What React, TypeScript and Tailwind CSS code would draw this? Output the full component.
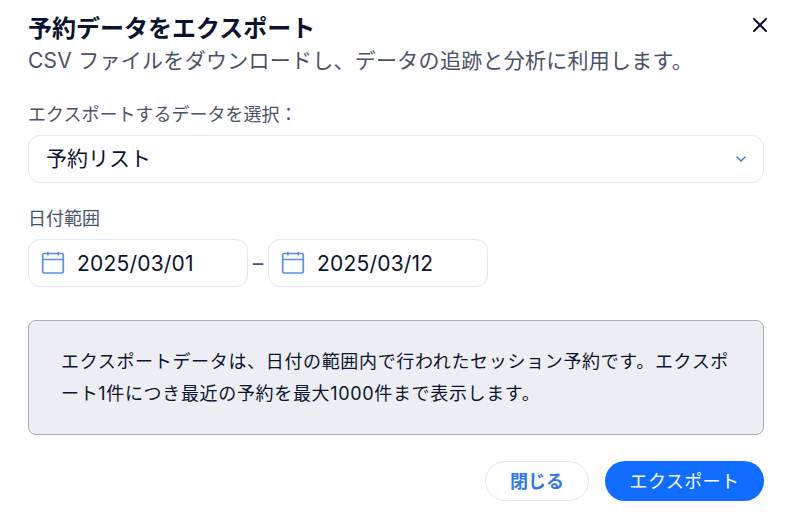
import { ChevronDown, X } from 'lucide-react'

const font = 'font-["Inter","Noto_Sans_CJK_JP",sans-serif]'

function CalendarIcon() {
  return (
    <svg width="24" height="24" viewBox="0 0 24 24" fill="none" stroke="#5a8fea" strokeWidth="1.7">
      <rect x="1.7" y="2.5" width="20.6" height="19.5" rx="1.5" />
      <path d="M1.7 8.5h20.6M7 1v3.5M17.2 1v3.5" />
    </svg>
  )
}

function DateField({ value }: { value: string }) {
  return (
    <div className="flex items-center w-[220px] h-12 rounded-xl border border-[#dfe9f6] bg-white pl-3">
      <CalendarIcon />
      <span className="ml-3 mt-px text-[21px] tracking-[0.2px] text-[#0c1330]">{value}</span>
    </div>
  )
}

export default function App() {
  return (
    <div className={`${font} relative w-[794px] h-[522px] bg-white px-7 pt-[14px] overflow-hidden`}>
      <button className="absolute right-[22px] top-[13px] text-[#0c1330]">
        <X size={24} strokeWidth={2} />
      </button>
      <h1 className="text-[24px] leading-[30px] font-bold text-[#0c1330]">予約データをエクスポート</h1>
      <p className="mt-px text-[21px] tracking-[0.27px] leading-[32px] text-[#4b5268]">CSV ファイルをダウンロードし、データの追跡と分析に利用します。</p>

      <div className="mt-[26px] text-[18px] leading-[24px] text-[#4b5268]">エクスポートするデータを選択：</div>
      <div className="mt-[8px] flex items-center justify-between w-[736px] h-12 rounded-xl border border-[#dfe9f6] bg-white pl-[17px] pr-[14px]">
        <span className="text-[21px] text-[#0c1330]">予約リスト</span>
        <ChevronDown size={16} strokeWidth={1.8} className="text-[#2f6fdc]" />
      </div>

      <div className="mt-[24px] text-[18px] leading-[24px] text-[#4b5268]">日付範囲</div>
      <div className="mt-[8px] flex items-center">
        <DateField value="2025/03/01" />
        <span className="w-5 mt-px text-center text-[21px] text-[#4b5268]">–</span>
        <DateField value="2025/03/12" />
      </div>

      <div className="mt-[33px] w-[736px] h-[115px] rounded-lg border border-[#a8abbd] bg-[#eceef3] pl-8 pr-7 py-[25px] text-[18px] tracking-[0.66px] leading-[32px] text-[#0c1330]">
        エクスポートデータは、日付の範囲内で行われたセッション予約です。エクスポ<br />ート1件につき最近の予約を最大1000件まで表示します。
      </div>

      <div className="mt-[26px] w-[736px] flex justify-end gap-4">
        <button className="w-[104px] h-10 rounded-full border border-[#dfe9f6] bg-white text-[18px] font-bold text-[#2f78e6]">閉じる</button>
        <button className="w-[159px] h-10 rounded-full bg-[#116dff] text-[18px] tracking-[0.4px] text-white">エクスポート</button>
      </div>
    </div>
  )
}
